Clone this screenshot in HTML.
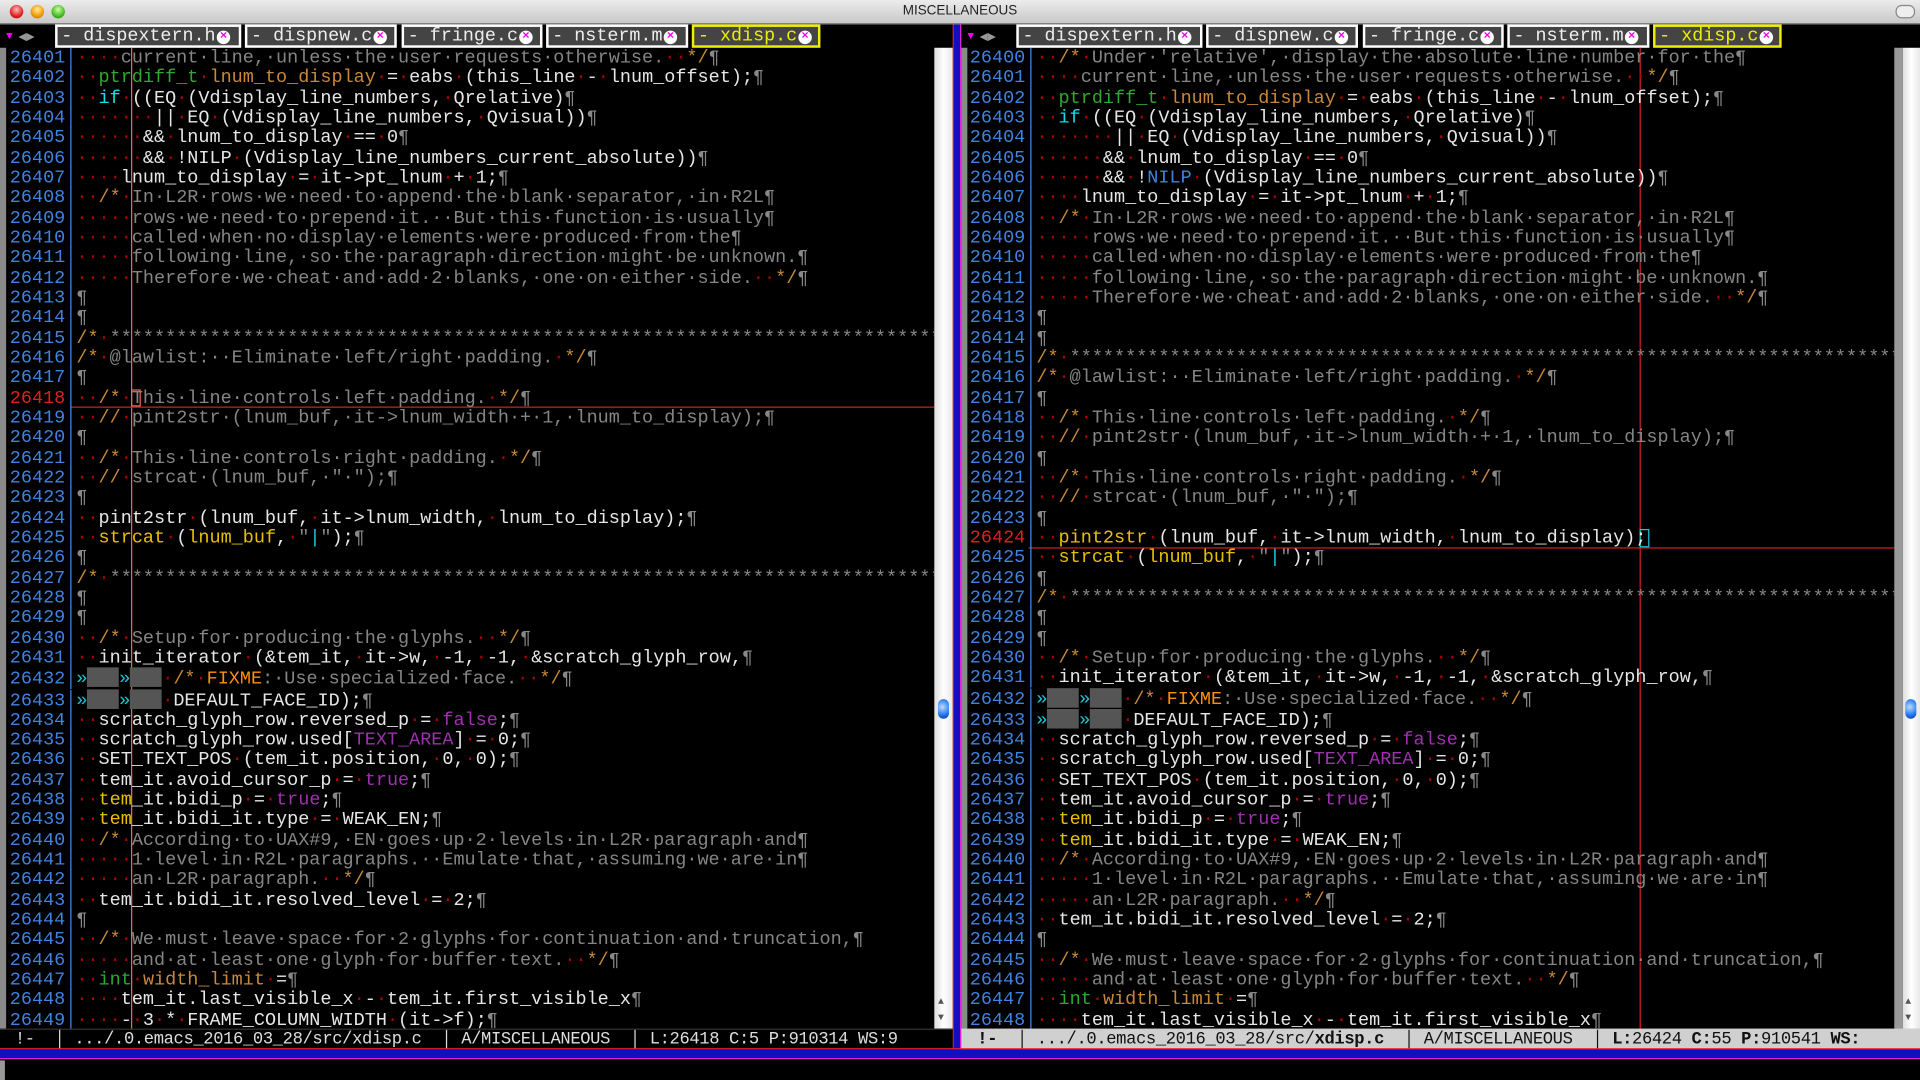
<!DOCTYPE html>
<html><head><meta charset="utf-8">
<style>
html,body{margin:0;padding:0;background:#000;width:1920px;height:1080px;overflow:hidden}
#w{position:absolute;left:0;top:0;width:1568px;height:882px;transform:scale(1.2244898);transform-origin:0 0;background:#000;overflow:hidden;font-family:"Liberation Mono",monospace}
.title{position:absolute;left:0;top:0;width:1568px;height:19px;background:linear-gradient(#ececec,#c8c8c8);border-bottom:1px solid #888;font:11px "Liberation Sans",sans-serif;text-align:center;line-height:18px;color:#222}
.tl{position:absolute;top:4px;width:11px;height:11px;border-radius:50%}
.tabs{position:absolute;top:20px;height:19px}
.tab{position:absolute;top:0;height:15px;border:2px solid #fff;background:#444;color:#eee;font-size:15px;line-height:15px;white-space:pre;padding-left:3px}
.tab.a{border-color:#ee0;color:#ee0}
.x{display:inline-block;width:11px;height:11px;border-radius:50%;background:#fff;color:#e0e;font-size:10px;line-height:11px;text-align:center;vertical-align:1px;font-weight:bold;margin-left:1px}
.pane{position:absolute;top:39px;height:801px;overflow:hidden}
pre{margin:0;font-family:"Liberation Mono",monospace;font-size:15.1px;line-height:16.33px;color:#e6e6e6;white-space:pre}
.n{color:#3f82e0}.d{color:#b00000}.c{color:#858585}.o{color:#c88838}.g{color:#2ea82e}.k{color:#10e0e8}.y{color:#e6c000}.p{color:#a030b0}.f{color:#ff9000}.q{color:#888}.t{color:#18c8d8}
.bx{display:inline-block;width:26px;height:16px;background:#555;vertical-align:-3px}
.mode{position:absolute;top:841px;height:16px;font-size:14px;line-height:16px;white-space:pre;letter-spacing:-0.3px}
</style></head><body><div id="w">
<div class="title">MISCELLANEOUS</div>
<div class="tl" style="left:8px;background:radial-gradient(circle at 50% 35%,#fbb,#d22 60%,#900)"></div>
<div class="tl" style="left:25px;background:radial-gradient(circle at 50% 35%,#fe9,#e90 60%,#a60)"></div>
<div class="tl" style="left:42px;background:radial-gradient(circle at 50% 35%,#cfa,#4b2 60%,#270)"></div>
<div style="position:absolute;left:1548px;top:4px;width:14px;height:9px;border:1px solid #888;border-radius:5px;background:#eee"></div>

<div class="tabs" style="left:0;width:780px">
<span style="position:absolute;left:5px;top:5px;color:#e0e;font-size:9px">▼</span>
<span style="position:absolute;left:15px;top:3px;color:#999;font-size:11px">◀▶</span>
<div class="tab" style="left:45px;width:145px">- dispextern.h<span class="x">×</span></div>
<div class="tab" style="left:200px;width:117px">- dispnew.c<span class="x">×</span></div>
<div class="tab" style="left:328px;width:108px">- fringe.c<span class="x">×</span></div>
<div class="tab" style="left:446px;width:109px">- nsterm.m<span class="x">×</span></div>
<div class="tab a" style="left:565px;width:98px">- xdisp.c<span class="x">×</span></div>
</div>
<div class="tabs" style="left:785px;width:780px">
<span style="position:absolute;left:5px;top:5px;color:#e0e;font-size:9px">▼</span>
<span style="position:absolute;left:15px;top:3px;color:#999;font-size:11px">◀▶</span>
<div class="tab" style="left:45px;width:145px">- dispextern.h<span class="x">×</span></div>
<div class="tab" style="left:200px;width:117px">- dispnew.c<span class="x">×</span></div>
<div class="tab" style="left:328px;width:108px">- fringe.c<span class="x">×</span></div>
<div class="tab" style="left:446px;width:109px">- nsterm.m<span class="x">×</span></div>
<div class="tab a" style="left:565px;width:98px">- xdisp.c<span class="x">×</span></div>
</div>

<div style="position:absolute;left:0;top:39px;width:5px;height:802px;background:#8a8a8a"></div>
<div style="position:absolute;left:778px;top:20px;width:1px;height:838px;background:#f02030"></div>
<div style="position:absolute;left:779px;top:20px;width:5px;height:838px;background:#1010c0"></div>
<div style="position:absolute;left:784px;top:20px;width:1px;height:838px;background:#e020e0"></div>
<div style="position:absolute;left:785px;top:39px;width:5px;height:802px;background:#8a8a8a"></div>
<div style="position:absolute;left:763px;top:39px;width:15px;height:802px;background:linear-gradient(90deg,#ddd,#fff,#e8e8e8)"></div>
<div style="position:absolute;left:766px;top:571px;width:9px;height:16px;border-radius:5px;background:radial-gradient(circle at 40% 40%,#bdf,#27e 60%,#139)"></div>
<div style="position:absolute;left:766px;top:812px;color:#555;font-size:8px;line-height:13px">▲<br>▼</div>
<div style="position:absolute;left:1547px;top:39px;width:7px;height:802px;background:#999"></div>
<div style="position:absolute;left:1554px;top:39px;width:14px;height:802px;background:linear-gradient(90deg,#ddd,#fff,#e8e8e8)"></div>
<div style="position:absolute;left:1556px;top:571px;width:9px;height:16px;border-radius:5px;background:radial-gradient(circle at 40% 40%,#bdf,#27e 60%,#139)"></div>
<div style="position:absolute;left:1556px;top:812px;color:#555;font-size:8px;line-height:13px">▲<br>▼</div>

<div style="position:absolute;left:107px;top:39px;width:1px;height:802px;background:#e07050"></div>
<div style="position:absolute;left:1339px;top:39px;width:1px;height:802px;background:#d02020"></div>
<div style="position:absolute;left:58px;top:332px;width:705px;height:1px;background:#d02020"></div>
<div style="position:absolute;left:840px;top:447px;width:707px;height:1px;background:#d02020"></div>
<div style="position:absolute;left:107px;top:318px;width:8px;height:14px;border:1px solid #e07050;box-sizing:border-box"></div>
<div style="position:absolute;left:1339px;top:432px;width:8px;height:15px;border:1px solid #18c8d8;box-sizing:border-box"></div>

<div class="pane" style="left:8px;width:755px"><pre><span class="n">26401│</span><span class="d">····</span><span class="c">current·line,·unless·the·user·requests·otherwise.</span><span class="d">··</span><span class="o">*/</span><span class="q">¶</span>
<span class="n">26402│</span><span class="d">··</span><span class="g">ptrdiff_t</span><span class="d">·</span><span class="o">lnum_to_display</span><span class="d">·</span>=<span class="d">·</span>eabs<span class="d">·</span>(this_line<span class="d">·</span>-<span class="d">·</span>lnum_offset);<span class="q">¶</span>
<span class="n">26403│</span><span class="d">··</span><span class="k">if</span><span class="d">·</span>((EQ<span class="d">·</span>(Vdisplay_line_numbers,<span class="d">·</span>Qrelative)<span class="q">¶</span>
<span class="n">26404│</span><span class="d">·······</span>||<span class="d">·</span>EQ<span class="d">·</span>(Vdisplay_line_numbers,<span class="d">·</span>Qvisual))<span class="q">¶</span>
<span class="n">26405│</span><span class="d">······</span>&amp;&amp;<span class="d">·</span>lnum_to_display<span class="d">·</span>==<span class="d">·</span>0<span class="q">¶</span>
<span class="n">26406│</span><span class="d">······</span>&amp;&amp;<span class="d">·</span>!NILP<span class="d">·</span>(Vdisplay_line_numbers_current_absolute))<span class="q">¶</span>
<span class="n">26407│</span><span class="d">····</span>lnum_to_display<span class="d">·</span>=<span class="d">·</span>it-&gt;pt_lnum<span class="d">·</span>+<span class="d">·</span>1;<span class="q">¶</span>
<span class="n">26408│</span><span class="d">··</span><span class="o">/*</span><span class="d">·</span><span class="c">In·L2R·rows·we·need·to·append·the·blank·separator,·in·R2L</span><span class="q">¶</span>
<span class="n">26409│</span><span class="d">·····</span><span class="c">rows·we·need·to·prepend·it.··But·this·function·is·usually</span><span class="q">¶</span>
<span class="n">26410│</span><span class="d">·····</span><span class="c">called·when·no·display·elements·were·produced·from·the</span><span class="q">¶</span>
<span class="n">26411│</span><span class="d">·····</span><span class="c">following·line,·so·the·paragraph·direction·might·be·unknown.</span><span class="q">¶</span>
<span class="n">26412│</span><span class="d">·····</span><span class="c">Therefore·we·cheat·and·add·2·blanks,·one·on·either·side.</span><span class="d">··</span><span class="o">*/</span><span class="q">¶</span>
<span class="n">26413│</span><span class="q">¶</span>
<span class="n">26414│</span><span class="q">¶</span>
<span class="n">26415│</span><span class="o">/*</span><span class="d">·</span><span class="c">****************************************************************************</span>
<span class="n">26416│</span><span class="o">/*</span><span class="d">·</span><span class="c">@lawlist:··Eliminate·left/right·padding.</span><span class="d">·</span><span class="o">*/</span><span class="q">¶</span>
<span class="n">26417│</span><span class="q">¶</span>
<span class="n" style="color:#e02020">26418</span><span class="n">│</span><span class="d">··</span><span class="o">/*</span><span class="d">·</span><span class="c">This·line·controls·left·padding.</span><span class="d">·</span><span class="o">*/</span><span class="q">¶</span>
<span class="n">26419│</span><span class="d">··</span><span class="o">//</span><span class="d">·</span><span class="c">pint2str·(lnum_buf,·it-&gt;lnum_width·+·1,·lnum_to_display);</span><span class="q">¶</span>
<span class="n">26420│</span><span class="q">¶</span>
<span class="n">26421│</span><span class="d">··</span><span class="o">/*</span><span class="d">·</span><span class="c">This·line·controls·right·padding.</span><span class="d">·</span><span class="o">*/</span><span class="q">¶</span>
<span class="n">26422│</span><span class="d">··</span><span class="o">//</span><span class="d">·</span><span class="c">strcat·(lnum_buf,·"·");</span><span class="q">¶</span>
<span class="n">26423│</span><span class="q">¶</span>
<span class="n">26424│</span><span class="d">··</span>pint2str<span class="d">·</span>(lnum_buf,<span class="d">·</span>it-&gt;lnum_width,<span class="d">·</span>lnum_to_display);<span class="q">¶</span>
<span class="n">26425│</span><span class="d">··</span><span class="y">strcat</span><span class="d">·</span>(<span class="y">lnum_buf</span>,<span class="d">·</span><span class="c">"</span><span class="t">|</span><span class="c">"</span>);<span class="q">¶</span>
<span class="n">26426│</span><span class="q">¶</span>
<span class="n">26427│</span><span class="o">/*</span><span class="d">·</span><span class="c">****************************************************************************</span>
<span class="n">26428│</span><span class="q">¶</span>
<span class="n">26429│</span><span class="q">¶</span>
<span class="n">26430│</span><span class="d">··</span><span class="o">/*</span><span class="d">·</span><span class="c">Setup·for·producing·the·glyphs.</span><span class="d">··</span><span class="o">*/</span><span class="q">¶</span>
<span class="n">26431│</span><span class="d">··</span>init_iterator<span class="d">·</span>(&amp;tem_it,<span class="d">·</span>it-&gt;w,<span class="d">·</span>-1,<span class="d">·</span>-1,<span class="d">·</span>&amp;scratch_glyph_row,<span class="q">¶</span>
<span class="n">26432│</span><span class="t">»</span><span class="bx"></span><span class="t">»</span><span class="bx"></span><span class="d">·</span><span class="o">/*</span><span class="d">·</span><span class="f">FIXME</span><span class="c">:·Use·specialized·face.</span><span class="d">··</span><span class="o">*/</span><span class="q">¶</span>
<span class="n">26433│</span><span class="t">»</span><span class="bx"></span><span class="t">»</span><span class="bx"></span><span class="d">·</span>DEFAULT_FACE_ID);<span class="q">¶</span>
<span class="n">26434│</span><span class="d">··</span>scratch_glyph_row.reversed_p<span class="d">·</span>=<span class="d">·</span><span class="p">false</span>;<span class="q">¶</span>
<span class="n">26435│</span><span class="d">··</span>scratch_glyph_row.used[<span class="p">TEXT_AREA</span>]<span class="d">·</span>=<span class="d">·</span>0;<span class="q">¶</span>
<span class="n">26436│</span><span class="d">··</span>SET_TEXT_POS<span class="d">·</span>(tem_it.position,<span class="d">·</span>0,<span class="d">·</span>0);<span class="q">¶</span>
<span class="n">26437│</span><span class="d">··</span>tem_it.avoid_cursor_p<span class="d">·</span>=<span class="d">·</span><span class="p">true</span>;<span class="q">¶</span>
<span class="n">26438│</span><span class="d">··</span><span class="y">tem</span>_it.bidi_p<span class="d">·</span>=<span class="d">·</span><span class="p">true</span>;<span class="q">¶</span>
<span class="n">26439│</span><span class="d">··</span><span class="y">tem</span>_it.bidi_it.type<span class="d">·</span>=<span class="d">·</span>WEAK_EN;<span class="q">¶</span>
<span class="n">26440│</span><span class="d">··</span><span class="o">/*</span><span class="d">·</span><span class="c">According·to·UAX#9,·EN·goes·up·2·levels·in·L2R·paragraph·and</span><span class="q">¶</span>
<span class="n">26441│</span><span class="d">·····</span><span class="c">1·level·in·R2L·paragraphs.··Emulate·that,·assuming·we·are·in</span><span class="q">¶</span>
<span class="n">26442│</span><span class="d">·····</span><span class="c">an·L2R·paragraph.</span><span class="d">··</span><span class="o">*/</span><span class="q">¶</span>
<span class="n">26443│</span><span class="d">··</span>tem_it.bidi_it.resolved_level<span class="d">·</span>=<span class="d">·</span>2;<span class="q">¶</span>
<span class="n">26444│</span><span class="q">¶</span>
<span class="n">26445│</span><span class="d">··</span><span class="o">/*</span><span class="d">·</span><span class="c">We·must·leave·space·for·2·glyphs·for·continuation·and·truncation,</span><span class="q">¶</span>
<span class="n">26446│</span><span class="d">·····</span><span class="c">and·at·least·one·glyph·for·buffer·text.</span><span class="d">··</span><span class="o">*/</span><span class="q">¶</span>
<span class="n">26447│</span><span class="d">··</span><span class="g">int</span><span class="d">·</span><span class="o">width_limit</span><span class="d">·</span>=<span class="q">¶</span>
<span class="n">26448│</span><span class="d">····</span>tem_it.last_visible_x<span class="d">·</span>-<span class="d">·</span>tem_it.first_visible_x<span class="q">¶</span>
<span class="n">26449│</span><span class="d">····</span>-<span class="d">·</span>3<span class="d">·</span>*<span class="d">·</span>FRAME_COLUMN_WIDTH<span class="d">·</span>(it-&gt;f);<span class="q">¶</span></pre></div>

<div class="pane" style="left:792px;width:755px"><pre><span class="n">26400│</span><span class="d">··</span><span class="o">/*</span><span class="d">·</span><span class="c">Under·'relative',·display·the·absolute·line·number·for·the</span><span class="q">¶</span>
<span class="n">26401│</span><span class="d">····</span><span class="c">current·line,·unless·the·user·requests·otherwise.</span><span class="d">··</span><span class="o">*/</span><span class="q">¶</span>
<span class="n">26402│</span><span class="d">··</span><span class="g">ptrdiff_t</span><span class="d">·</span><span class="o">lnum_to_display</span><span class="d">·</span>=<span class="d">·</span>eabs<span class="d">·</span>(this_line<span class="d">·</span>-<span class="d">·</span>lnum_offset);<span class="q">¶</span>
<span class="n">26403│</span><span class="d">··</span><span class="k">if</span><span class="d">·</span>((EQ<span class="d">·</span>(Vdisplay_line_numbers,<span class="d">·</span>Qrelative)<span class="q">¶</span>
<span class="n">26404│</span><span class="d">·······</span>||<span class="d">·</span>EQ<span class="d">·</span>(Vdisplay_line_numbers,<span class="d">·</span>Qvisual))<span class="q">¶</span>
<span class="n">26405│</span><span class="d">······</span>&amp;&amp;<span class="d">·</span>lnum_to_display<span class="d">·</span>==<span class="d">·</span>0<span class="q">¶</span>
<span class="n">26406│</span><span class="d">······</span>&amp;&amp;<span class="d">·</span>!<span class="n">NILP</span><span class="d">·</span>(Vdisplay_line_numbers_current_absolute))<span class="q">¶</span>
<span class="n">26407│</span><span class="d">····</span>lnum_to_display<span class="d">·</span>=<span class="d">·</span>it-&gt;pt_lnum<span class="d">·</span>+<span class="d">·</span>1;<span class="q">¶</span>
<span class="n">26408│</span><span class="d">··</span><span class="o">/*</span><span class="d">·</span><span class="c">In·L2R·rows·we·need·to·append·the·blank·separator,·in·R2L</span><span class="q">¶</span>
<span class="n">26409│</span><span class="d">·····</span><span class="c">rows·we·need·to·prepend·it.··But·this·function·is·usually</span><span class="q">¶</span>
<span class="n">26410│</span><span class="d">·····</span><span class="c">called·when·no·display·elements·were·produced·from·the</span><span class="q">¶</span>
<span class="n">26411│</span><span class="d">·····</span><span class="c">following·line,·so·the·paragraph·direction·might·be·unknown.</span><span class="q">¶</span>
<span class="n">26412│</span><span class="d">·····</span><span class="c">Therefore·we·cheat·and·add·2·blanks,·one·on·either·side.</span><span class="d">··</span><span class="o">*/</span><span class="q">¶</span>
<span class="n">26413│</span><span class="q">¶</span>
<span class="n">26414│</span><span class="q">¶</span>
<span class="n">26415│</span><span class="o">/*</span><span class="d">·</span><span class="c">****************************************************************************</span>
<span class="n">26416│</span><span class="o">/*</span><span class="d">·</span><span class="c">@lawlist:··Eliminate·left/right·padding.</span><span class="d">·</span><span class="o">*/</span><span class="q">¶</span>
<span class="n">26417│</span><span class="q">¶</span>
<span class="n">26418│</span><span class="d">··</span><span class="o">/*</span><span class="d">·</span><span class="c">This·line·controls·left·padding.</span><span class="d">·</span><span class="o">*/</span><span class="q">¶</span>
<span class="n">26419│</span><span class="d">··</span><span class="o">//</span><span class="d">·</span><span class="c">pint2str·(lnum_buf,·it-&gt;lnum_width·+·1,·lnum_to_display);</span><span class="q">¶</span>
<span class="n">26420│</span><span class="q">¶</span>
<span class="n">26421│</span><span class="d">··</span><span class="o">/*</span><span class="d">·</span><span class="c">This·line·controls·right·padding.</span><span class="d">·</span><span class="o">*/</span><span class="q">¶</span>
<span class="n">26422│</span><span class="d">··</span><span class="o">//</span><span class="d">·</span><span class="c">strcat·(lnum_buf,·"·");</span><span class="q">¶</span>
<span class="n">26423│</span><span class="q">¶</span>
<span class="n" style="color:#e02020">26424</span><span class="n">│</span><span class="d">··</span><span class="y">pint2str</span><span class="d">·</span>(lnum_buf,<span class="d">·</span>it-&gt;lnum_width,<span class="d">·</span>lnum_to_display);
<span class="n">26425│</span><span class="d">··</span><span class="y">strcat</span><span class="d">·</span>(<span class="y">lnum_buf</span>,<span class="d">·</span><span class="c">"</span><span class="t">|</span><span class="c">"</span>);<span class="q">¶</span>
<span class="n">26426│</span><span class="q">¶</span>
<span class="n">26427│</span><span class="o">/*</span><span class="d">·</span><span class="c">****************************************************************************</span>
<span class="n">26428│</span><span class="q">¶</span>
<span class="n">26429│</span><span class="q">¶</span>
<span class="n">26430│</span><span class="d">··</span><span class="o">/*</span><span class="d">·</span><span class="c">Setup·for·producing·the·glyphs.</span><span class="d">··</span><span class="o">*/</span><span class="q">¶</span>
<span class="n">26431│</span><span class="d">··</span>init_iterator<span class="d">·</span>(&amp;tem_it,<span class="d">·</span>it-&gt;w,<span class="d">·</span>-1,<span class="d">·</span>-1,<span class="d">·</span>&amp;scratch_glyph_row,<span class="q">¶</span>
<span class="n">26432│</span><span class="t">»</span><span class="bx"></span><span class="t">»</span><span class="bx"></span><span class="d">·</span><span class="o">/*</span><span class="d">·</span><span class="f">FIXME</span><span class="c">:·Use·specialized·face.</span><span class="d">··</span><span class="o">*/</span><span class="q">¶</span>
<span class="n">26433│</span><span class="t">»</span><span class="bx"></span><span class="t">»</span><span class="bx"></span><span class="d">·</span>DEFAULT_FACE_ID);<span class="q">¶</span>
<span class="n">26434│</span><span class="d">··</span>scratch_glyph_row.reversed_p<span class="d">·</span>=<span class="d">·</span><span class="p">false</span>;<span class="q">¶</span>
<span class="n">26435│</span><span class="d">··</span>scratch_glyph_row.used[<span class="p">TEXT_AREA</span>]<span class="d">·</span>=<span class="d">·</span>0;<span class="q">¶</span>
<span class="n">26436│</span><span class="d">··</span>SET_TEXT_POS<span class="d">·</span>(tem_it.position,<span class="d">·</span>0,<span class="d">·</span>0);<span class="q">¶</span>
<span class="n">26437│</span><span class="d">··</span>tem_it.avoid_cursor_p<span class="d">·</span>=<span class="d">·</span><span class="p">true</span>;<span class="q">¶</span>
<span class="n">26438│</span><span class="d">··</span><span class="y">tem</span>_it.bidi_p<span class="d">·</span>=<span class="d">·</span><span class="p">true</span>;<span class="q">¶</span>
<span class="n">26439│</span><span class="d">··</span><span class="y">tem</span>_it.bidi_it.type<span class="d">·</span>=<span class="d">·</span>WEAK_EN;<span class="q">¶</span>
<span class="n">26440│</span><span class="d">··</span><span class="o">/*</span><span class="d">·</span><span class="c">According·to·UAX#9,·EN·goes·up·2·levels·in·L2R·paragraph·and</span><span class="q">¶</span>
<span class="n">26441│</span><span class="d">·····</span><span class="c">1·level·in·R2L·paragraphs.··Emulate·that,·assuming·we·are·in</span><span class="q">¶</span>
<span class="n">26442│</span><span class="d">·····</span><span class="c">an·L2R·paragraph.</span><span class="d">··</span><span class="o">*/</span><span class="q">¶</span>
<span class="n">26443│</span><span class="d">··</span>tem_it.bidi_it.resolved_level<span class="d">·</span>=<span class="d">·</span>2;<span class="q">¶</span>
<span class="n">26444│</span><span class="q">¶</span>
<span class="n">26445│</span><span class="d">··</span><span class="o">/*</span><span class="d">·</span><span class="c">We·must·leave·space·for·2·glyphs·for·continuation·and·truncation,</span><span class="q">¶</span>
<span class="n">26446│</span><span class="d">·····</span><span class="c">and·at·least·one·glyph·for·buffer·text.</span><span class="d">··</span><span class="o">*/</span><span class="q">¶</span>
<span class="n">26447│</span><span class="d">··</span><span class="g">int</span><span class="d">·</span><span class="o">width_limit</span><span class="d">·</span>=<span class="q">¶</span>
<span class="n">26448│</span><span class="d">····</span>tem_it.last_visible_x<span class="d">·</span>-<span class="d">·</span>tem_it.first_visible_x<span class="q">¶</span></pre></div>

<div style="position:absolute;left:0;top:840px;width:778px;height:17px;background:#000;border-top:1px solid #333"></div>
<div class="mode" style="left:4px;color:#ddd;width:774px;overflow:hidden"> !-  │ .../.0.emacs_2016_03_28/src/xdisp.c  │ A/MISCELLANEOUS  │ L:26418 C:5 P:910314 WS:9</div>
<div style="position:absolute;left:785px;top:840px;width:783px;height:17px;background:#d0d0d0"></div>
<div class="mode" style="left:790px;color:#111;width:778px;overflow:hidden"> <b>!-</b>  │ .../.0.emacs_2016_03_28/src/<b>xdisp.c</b>  │ A/MISCELLANEOUS  │ <b>L:</b>26424 <b>C:</b>55 <b>P:</b>910541 <b>WS:</b></div>
<div style="position:absolute;left:0;top:856px;width:1568px;height:1px;background:#f02030"></div>
<div style="position:absolute;left:0;top:857px;width:1568px;height:7px;background:#1010c0"></div>
<div style="position:absolute;left:0;top:864px;width:1568px;height:1px;background:#e020e0"></div>
<div style="position:absolute;left:0;top:866px;width:4px;height:16px;background:#999"></div>
</div></body></html>
